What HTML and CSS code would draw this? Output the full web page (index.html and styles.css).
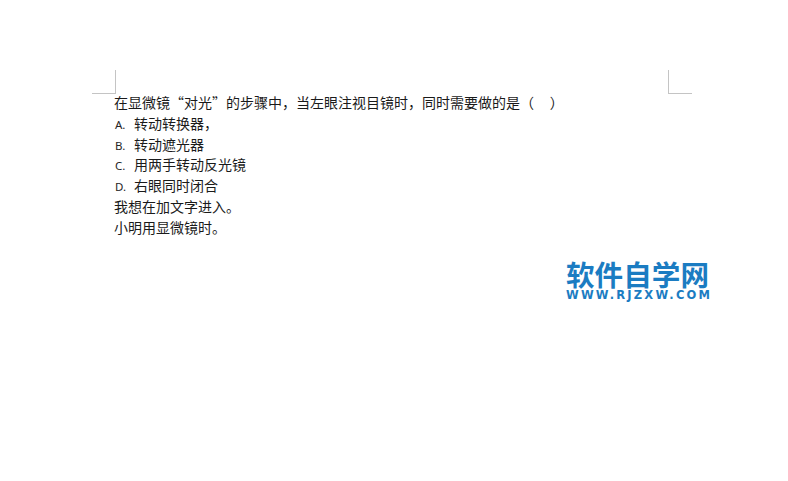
FILE: index.html
```html
<!DOCTYPE html>
<html lang="zh">
<head>
<meta charset="utf-8">
<title>文档</title>
<link rel="stylesheet" href="styles.css">
</head>
<body>
<div class="page">
  <div class="marks">
    <div class="mark mark-left"></div>
    <div class="mark mark-right"></div>
  </div>
  <div class="doc">
    <p class="line">在显微镜“对光”的步骤中，当左眼注视目镜时，同时需要做的是（&nbsp;&nbsp;&nbsp;&nbsp;&nbsp;）</p>
    <p class="line"><span class="opt">A.</span>转动转换器，</p>
    <p class="line"><span class="opt">B.</span>转动遮光器</p>
    <p class="line"><span class="opt">C.</span>用两手转动反光镜</p>
    <p class="line"><span class="opt">D.</span>右眼同时闭合</p>
    <p class="line">我想在加文字进入。</p>
    <p class="line">小明用显微镜时。</p>
  </div>
  <div class="logo">
    <div class="logo-cn">软件自学网</div>
    <div class="logo-en">WWW.RJZXW.COM</div>
  </div>
</div>
</body>
</html>
```
FILE: styles.css
```css
html, body {
  margin: 0;
  padding: 0;
  background: #fff;
}
.page {
  width: 788px;
  height: 481px;
  overflow: hidden;
  padding-top: 70px;
  box-sizing: border-box;
  font-family: "Noto Sans CJK SC", "Liberation Sans", sans-serif;
  color: #1a1a1a;
}
.marks {
  display: flex;
  justify-content: space-between;
  margin: 0 96px 0 92px;
}
.mark {
  width: 23px;
  height: 23px;
  border-bottom: 1px solid #c4c4c4;
}
.mark-left {
  border-right: 1px solid #c4c4c4;
}
.mark-right {
  border-left: 1px solid #c4c4c4;
}
.doc {
  margin: -2px 0 0 114px;
}
.line {
  margin: 0;
  height: 20.8px;
  line-height: 20.8px;
  font-size: 14px;
  white-space: nowrap;
}
.opt {
  display: inline-block;
  width: 19px;
  margin-left: 1px;
  font-family: "Noto Sans", "Liberation Sans", sans-serif;
  font-size: 11.5px;
  color: #262626;
}
.logo {
  margin: 21px 0 0 566px;
  width: 145px;
  color: #1b7cc2;
}
.logo-cn {
  font-size: 28.6px;
  line-height: 29px;
  font-weight: 700;
  white-space: nowrap;
}
.logo-en {
  margin-top: 2px;
  font-family: "DejaVu Sans", sans-serif;
  font-size: 11.5px;
  line-height: 11px;
  font-weight: 700;
  letter-spacing: 2.2px;
  white-space: nowrap;
}
```
